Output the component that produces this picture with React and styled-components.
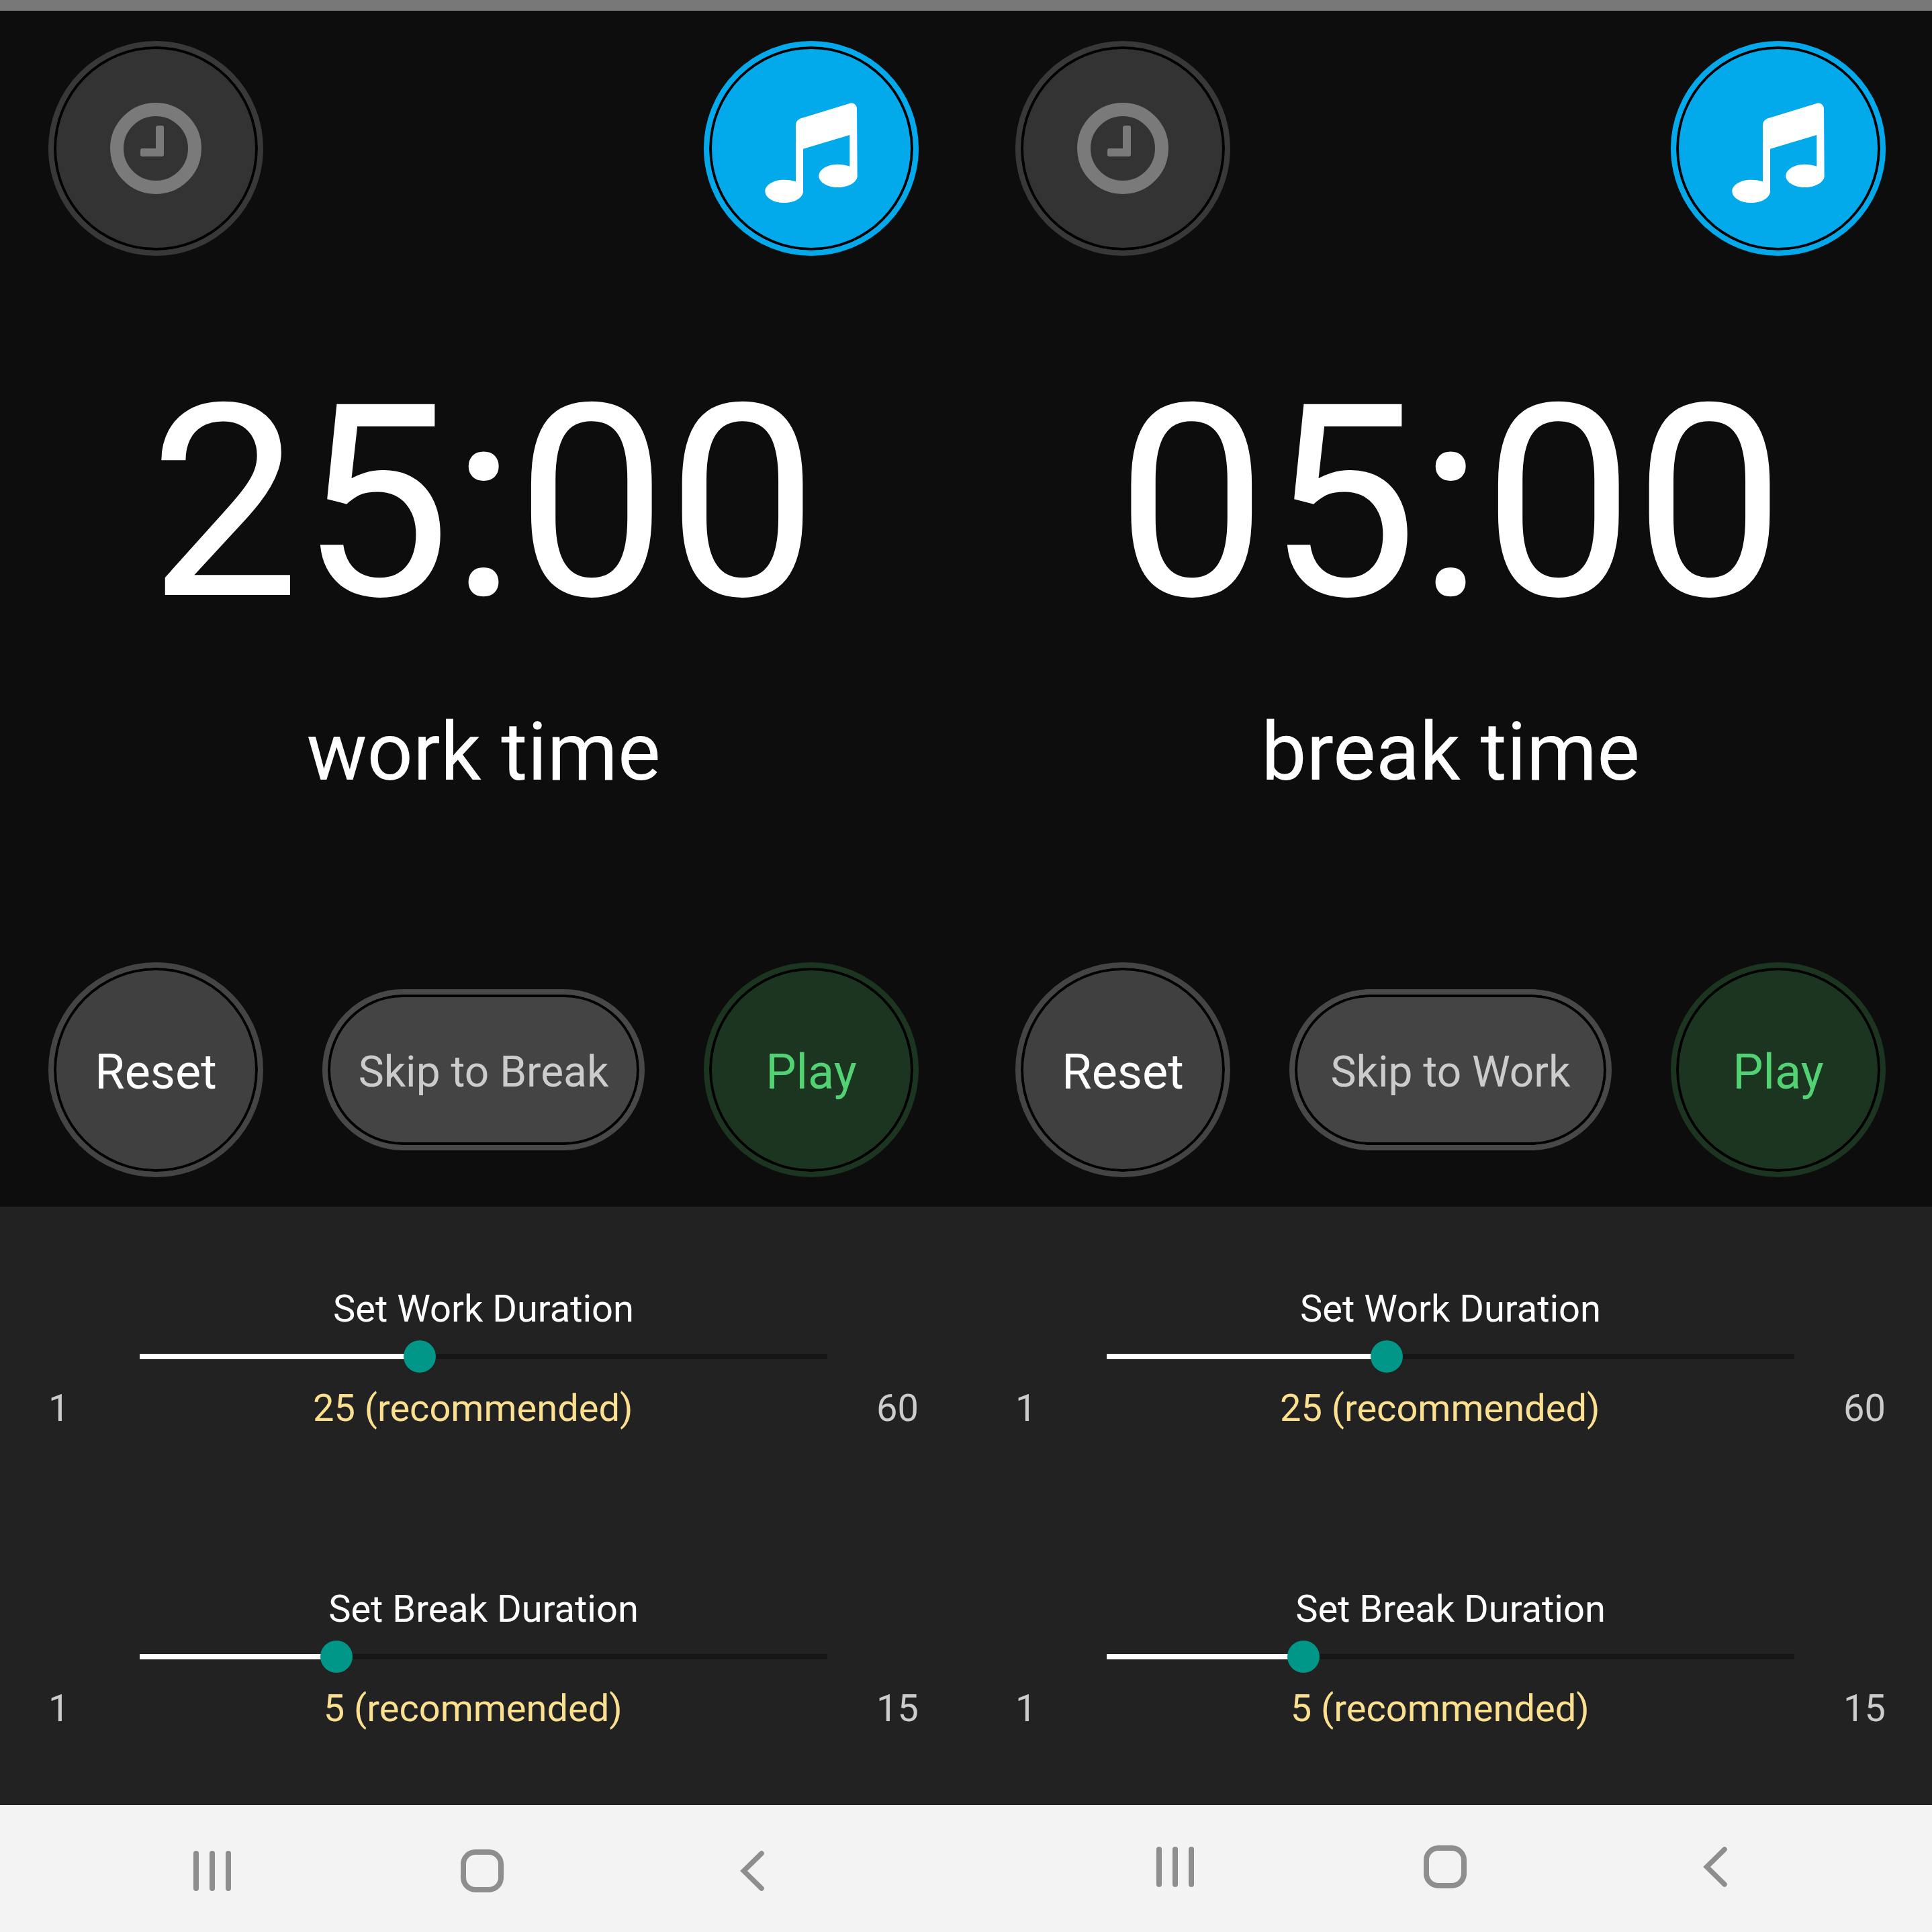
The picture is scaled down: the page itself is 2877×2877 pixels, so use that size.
import React from 'react'
import styled, { createGlobalStyle } from 'styled-components'

const GlobalStyle = createGlobalStyle`
  html, body {
    margin: 0;
    padding: 0;
    background: #0d0d0d;
  }
  * {
    box-sizing: border-box;
  }
`

const ClockIcon = () => (
  <svg width="136" height="136" viewBox="-68 -68 136 136">
    <circle cx="0" cy="0" r="58" fill="none" stroke="#7a7a7a" strokeWidth="20" />
    <path
      d="M3 -34 H9 Q12 -34 12 -31 V9 Q12 12 9 12 H-20 Q-23 12 -23 9 V3 Q-23 0 -20 0 H0 V-31 Q0 -34 3 -34 Z"
      fill="#7a7a7a"
    />
  </svg>
)

const MusicIcon = () => (
  <MusicSvg width="138" height="149" viewBox="300 308 412 447">
    <path
      d="M710 335 C710 318 695 306 680 310 L460 378 C445 383 437 395 437 410 L437 660 C420 654 400 652 385 652 C338 652 300 675 300 703 C300 732 338 755 385 755 C432 755 470 732 470 703 L470 514 L678 452 L678 592 C660 586 640 583 625 583 C578 583 540 606 540 635 C540 663 578 686 625 686 C672 686 712 663 712 635 Z"
      fill="#ffffff"
    />
  </MusicSvg>
)

const Slider = ({ title, value, min, max }) => {
  const percent = ((value - min) / (max - min)) * 100
  return (
    <SliderBlock>
      <SliderTitle>{title}</SliderTitle>
      <Track>
        <TrackFill style={{ width: `${percent}%` }} />
        <Thumb style={{ left: `${percent}%` }} />
      </Track>
      <SliderScale>
        <ScaleLimit>{min}</ScaleLimit>
        <ScaleValue>{value} (recommended)</ScaleValue>
        <ScaleLimit>{max}</ScaleLimit>
      </SliderScale>
    </SliderBlock>
  )
}

const NavBar = ({ second }) => (
  <Nav $second={second}>
    <svg width="56" height="60" viewBox="0 0 56 60">
      <g stroke="#8e8e8e" strokeWidth="8" strokeLinecap="round">
        <line x1="4" y1="4" x2="4" y2="56" />
        <line x1="28" y1="4" x2="28" y2="56" />
        <line x1="52" y1="4" x2="52" y2="56" />
      </g>
    </svg>
    <svg width="64" height="64" viewBox="0 0 64 64">
      <rect x="4" y="4" width="56" height="56" rx="18" fill="none" stroke="#8e8e8e" strokeWidth="8" />
    </svg>
    <svg width="36" height="60" viewBox="0 0 36 60">
      <path d="M32 4 L5.5 30 L32 56" fill="none" stroke="#8e8e8e" strokeWidth="7.5" strokeLinecap="round" strokeLinejoin="miter" />
    </svg>
  </Nav>
)

const Screen = ({ time, name, skip, second }) => (
  <Panel>
    <StatusStrip />
    <TimerArea>
      <TopRow>
        <RoundButton $fill="#333333" $ring="#383838">
          <ClockIcon />
        </RoundButton>
        <RoundButton $fill="#02aaec" $ring="#02aaec">
          <MusicIcon />
        </RoundButton>
      </TopRow>
      <TimeText>{time}</TimeText>
      <TimeName>{name}</TimeName>
      <ActionRow>
        <RoundButton $fill="#404040" $ring="#444444" $color="#ffffff" $label>Reset</RoundButton>
        <SkipButton>{skip}</SkipButton>
        <RoundButton $fill="#1b3520" $ring="#1b3520" $color="#52d273" $label>Play</RoundButton>
      </ActionRow>
    </TimerArea>
    <SettingsArea>
      <Slider title="Set Work Duration" value={25} min={1} max={60} />
      <Slider title="Set Break Duration" value={5} min={1} max={15} />
    </SettingsArea>
    <NavBar second={second} />
  </Panel>
)

export default function App() {
  return (
    <Page>
      <GlobalStyle />
      <Screen time="25:00" name="work time" skip="Skip to Break" />
      <Screen time="05:00" name="break time" skip="Skip to Work" second />
    </Page>
  )
}

const Page = styled.div`
  display: grid;
  grid-template-columns: 1440px 1440px;
  width: 2877px;
  height: 2877px;
  overflow: hidden;
  font-family: Roboto, "Liberation Sans", sans-serif;
`

const Panel = styled.section`
  display: flex;
  flex-direction: column;
  height: 2877px;
`

const StatusStrip = styled.div`
  height: 16px;
  background: #787878;
`

const TimerArea = styled.div`
  height: 1781px;
  padding: 45px 72px 0;
  background: #0d0d0d;
  display: flex;
  flex-direction: column;
`

const TopRow = styled.div`
  display: flex;
  justify-content: space-between;
`

const RoundButton = styled.div`
  width: 320px;
  height: 320px;
  flex: none;
  border-radius: 50%;
  border: 8px solid ${(p) => p.$ring};
  background: ${(p) => p.$fill};
  box-shadow: inset 0 0 0 4px #000000;
  color: ${(p) => p.$color || '#ffffff'};
  display: flex;
  align-items: center;
  justify-content: center;
  font-size: 72px;
  padding-top: ${(p) => (p.$label ? 6 : 0)}px;
`

const MusicSvg = styled.svg`
  margin-top: 13px;
`

const TimeText = styled.div`
  margin-top: 129px;
  height: 480px;
  line-height: 480px;
  text-align: center;
  color: #ffffff;
  font-size: 400px;
`

const TimeName = styled.div`
  margin-top: 60px;
  height: 140px;
  line-height: 140px;
  text-align: center;
  color: #ffffff;
  font-size: 120px;
`

const ActionRow = styled.div`
  margin-top: 243px;
  display: flex;
  align-items: center;
  justify-content: space-between;
`

const SkipButton = styled.div`
  width: 480px;
  height: 240px;
  border-radius: 120px;
  border: 8px solid #484848;
  background: #444444;
  box-shadow: inset 0 0 0 4px #000000;
  color: #cccccc;
  display: flex;
  align-items: center;
  justify-content: center;
  font-size: 64px;
  padding-top: 6px;
`

const SettingsArea = styled.div`
  height: 891px;
  padding-top: 119px;
  background: #222222;
  display: flex;
  flex-direction: column;
  gap: 233px;
`

const SliderBlock = styled.div`
  padding: 0 72px;
`

const SliderTitle = styled.div`
  height: 66px;
  line-height: 66px;
  text-align: center;
  color: #ffffff;
  font-size: 56px;
`

const Track = styled.div`
  position: relative;
  height: 8px;
  margin: 34px 136px 0;
  background: #161616;
`

const TrackFill = styled.div`
  height: 100%;
  background: #ffffff;
`

const Thumb = styled.div`
  position: absolute;
  top: -20px;
  width: 48px;
  height: 48px;
  margin-left: -24px;
  border-radius: 50%;
  background: #009688;
`

const SliderScale = styled.div`
  margin-top: 40px;
  display: flex;
  align-items: center;
  justify-content: space-between;
  height: 66px;
  line-height: 66px;
  font-size: 56px;
`

const ScaleLimit = styled.span`
  color: #cccccc;
`

const ScaleValue = styled.span`
  color: #fbe08f;
`

const Nav = styled.div`
  width: ${(p) => (p.$second ? 1437 : 1440)}px;
  flex: 1;
  background: #f3f3f3;
  display: grid;
  grid-template-columns: repeat(3, 402px);
  justify-items: center;
  align-items: center;
  padding-left: ${(p) => (p.$second ? 109 : 115)}px;
  padding-top: ${(p) => (p.$second ? 0 : 7)}px;
  padding-bottom: ${(p) => (p.$second ? 5 : 0)}px;
`
